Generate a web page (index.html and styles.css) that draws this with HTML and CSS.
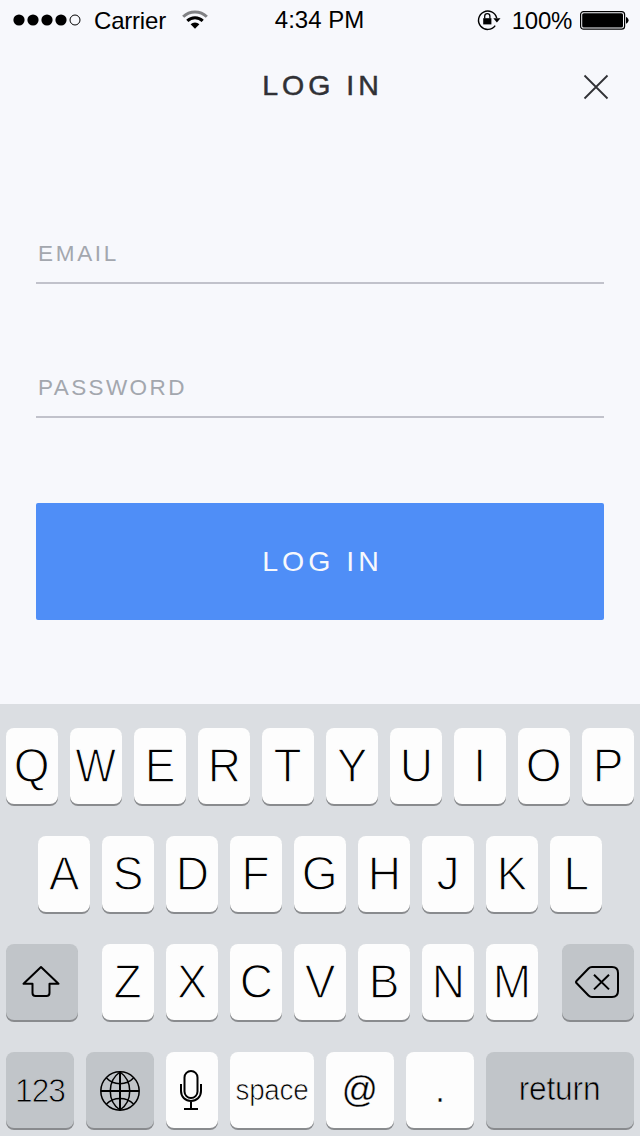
FILE: index.html
```
<!DOCTYPE html>
<html lang="en">
<head>
<meta charset="utf-8">
<title>Log in</title>
<link rel="stylesheet" href="styles.css">
</head>
<body>
<div class="screen">
  <div class="status">
    <div class="status-left">
      <svg class="signal" width="70" height="14" viewBox="0 0 70 14"><g><circle cx="6" cy="7" r="5.6"/><circle cx="20" cy="7" r="5.6"/><circle cx="34" cy="7" r="5.6"/><circle cx="48" cy="7" r="5.6"/></g><circle cx="62" cy="7" r="5" fill="none" stroke="#000"/></svg>
      <span class="carrier">Carrier</span>
      <svg class="wifi" width="26" height="20" viewBox="0 0 26 20" fill="none"><path d="M1.2 6.8a16.6 16.6 0 0 1 23.6 0" stroke="#808184" stroke-width="3"/><path d="M5.3 10.9a10.9 10.9 0 0 1 15.4 0" stroke="#000" stroke-width="3"/><path d="M8.6 14.3a6.2 6.2 0 0 1 8.8 0L13 18.7z" fill="#000"/></svg>
    </div>
    <span class="time">4:34 PM</span>
    <div class="status-right">
      <svg class="lock" width="24" height="22" viewBox="0 0 24 22" fill="none"><path d="M18.2 16.6A9.2 9.2 0 1 1 19.7 9.2" stroke="#000" stroke-width="1.4"/><path d="M16.3 9.3h7.2l-3.6 4.2z" fill="#000"/><path d="M6.2 9.2h8.2v6.2H6.2z" fill="#000"/><path d="M7.7 9.5V7.2a2.6 2.6 0 0 1 5.2 0v2.3" stroke="#000" stroke-width="1.3"/></svg>
      <span class="percent">100%</span>
      <svg class="battery" width="49" height="20" viewBox="0 0 49 20"><rect x=".6" y="1.6" width="44" height="17.6" rx="3" fill="none" stroke="#000" stroke-width="1.2"/><rect x="2.2" y="3.200" width="40.800" height="14.400" rx="1.6"/><path d="M46 7c3.4 1.300 3.4 5.400 0 6.700z"/></svg>
    </div>
  </div>

  <header class="header">
    <h1 class="title">LOG IN</h1>
    <svg class="close" width="26" height="26" viewBox="0 0 26 26"><path d="M1.5 1.5l23 23M24.5 1.5l-23 23" stroke="#303135" stroke-width="1.8"/></svg>
  </header>

  <main class="form">
    <div class="field email">EMAIL</div>
    <div class="field password">PASSWORD</div>
    <button class="submit">LOG IN</button>
  </main>

  <section class="keyboard">
    <div class="row">
      <div class="key"><span>Q</span></div><div class="key"><span class="w">W</span></div><div class="key"><span>E</span></div><div class="key"><span>R</span></div><div class="key"><span>T</span></div><div class="key"><span>Y</span></div><div class="key"><span>U</span></div><div class="key"><span>I</span></div><div class="key"><span>O</span></div><div class="key"><span>P</span></div>
    </div>
    <div class="row">
      <div class="key"><span>A</span></div><div class="key"><span>S</span></div><div class="key"><span>D</span></div><div class="key"><span>F</span></div><div class="key"><span>G</span></div><div class="key"><span>H</span></div><div class="key"><span>J</span></div><div class="key"><span>K</span></div><div class="key"><span>L</span></div>
    </div>
    <div class="row spread">
      <div class="key dark side">
        <svg width="40" height="34" viewBox="0 0 40 34" fill="none" stroke="#000" stroke-width="2" stroke-linejoin="round"><path d="M19 2L1.500 18.800H10.500V28q0 3 3 3h11q3 0 3-3v-9.200H36.500z"/></svg>
      </div>
      <div class="letters">
        <div class="key"><span>Z</span></div><div class="key"><span>X</span></div><div class="key"><span>C</span></div><div class="key"><span>V</span></div><div class="key"><span>B</span></div><div class="key"><span>N</span></div><div class="key"><span>M</span></div>
      </div>
      <div class="key dark side">
        <svg width="46" height="34" viewBox="0 0 46 34" fill="none" stroke="#000" stroke-width="2" stroke-linejoin="round"><path d="M17 2H37q6 0 6 6v18q0 6-6 6H17q-2 0-3.500-1.500L1.700 18.300q-1.300-1.300 0-2.600L13.500 3.500Q15 2 17 2zM19 9.800l15 14.600M34 9.800L19 24.400"/></svg>
      </div>
    </div>
    <div class="row">
      <div class="key dark mid"><span class="digits">123</span></div>
      <div class="key dark mid">
        <svg class="globe" width="42" height="42" viewBox="0 0 42 42" fill="none" stroke="#000" stroke-width="1.500"><circle cx="21" cy="21" r="19.200"/><path stroke-width="2" d="M21 2v38M2 21h38"/><path d="M21 2C8 11 8 31 21 40M21 2c13 9 13 29 0 38M7.500 8c7 7.500 20 7.500 27 0M7.500 34c7-7.500 20-7.500 27 0"/></svg>
      </div>
      <div class="key">
        <svg class="mic" width="24" height="42" viewBox="0 0 24 42" fill="none" stroke="#000" stroke-width="2"><rect x="5.500" y="2" width="13" height="27" rx="6.500"/><path d="M2 15v7c0 6 4.500 10 10 10s10-4 10-10v-7M12 32v8M5 40h14"/></svg>
      </div>
      <div class="key space"><span class="word">space</span></div>
      <div class="key mid"><span class="at">@</span></div>
      <div class="key mid"><span class="dot">.</span></div>
      <div class="key dark return"><span class="word big">return</span></div>
    </div>
  </section>
</div>
</body>
</html>
```
FILE: styles.css
```
* { box-sizing: border-box; }
body {
  margin: 0;
  font-family: "Liberation Sans", Arial, sans-serif;
  color: #000;
}
svg { display: block; flex: none; }
.screen {
  width: 640px;
  height: 1136px;
  overflow: hidden;
  background: #f7f8fc;
  display: flex;
  flex-direction: column;
}
.status {
  height: 40px;
  display: grid;
  grid-template-columns: 1fr auto 1fr;
  align-items: center;
  padding: 0 11px 0 13px;
  font-size: 24px;
  line-height: 28px;
}
.status-left, .status-right { display: flex; align-items: center; }
.status-right { justify-content: flex-end; }
.time { margin: 0 2px 0 -1px; }
.carrier { margin-left: 11px; letter-spacing: -0.2px; padding-top: 2px; }
.wifi { margin-left: 16px; }
.percent { margin: 2px 8px 0 11px; letter-spacing: -0.3px; }

.header {
  height: 90px;
  display: grid;
  grid-template-columns: 1fr auto 1fr;
  padding: 28px 31px 0;
}
.title {
  grid-column: 2;
  margin: 0 0 0 5px;
  font-size: 28.500px;
  line-height: 34px;
  font-weight: 400;
  letter-spacing: 4px;
  color: #303135;
  -webkit-text-stroke: 0.500px #303135;
}
.close { justify-self: end; margin-top: 6px; }

.form {
  height: 574px;
  padding: 94px 36px 0;
  display: flex;
  flex-direction: column;
}
.field {
  height: 60px;
  padding: 16px 0 0 2px;
  border-bottom: 2px solid #c1c2cb;
  font-size: 22.500px;
  line-height: 28px;
  color: #a3a7ae;
}
.email { letter-spacing: 2.700px; }
.password { margin-top: 74px; letter-spacing: 2.400px; }
.submit {
  height: 117px;
  margin-top: 85px;
  border: 0;
  border-radius: 2px;
  background: #4f8ef7;
  color: #f7f8fc;
  font: 28.500px/34px "Liberation Sans", Arial, sans-serif;
  letter-spacing: 4px;
  padding: 0 0 2px 5px;
}

.keyboard {
  height: 432px;
  background: #dbdee2;
  padding: 24px 6px 0;
  display: flex;
  flex-direction: column;
  gap: 32px;
}
.row, .letters { display: flex; justify-content: center; gap: 12px; }
.spread { justify-content: space-between; }
.key {
  width: 52px;
  height: 76px;
  flex: none;
  border-radius: 8px;
  background: #fdfdfd;
  box-shadow: 0 2px 0 #898b8e;
  display: flex;
  align-items: center;
  justify-content: center;
  font-size: 48px;
  line-height: 76px;
  -webkit-text-stroke: 1.300px #fdfdfd;
}
.key svg { -webkit-text-stroke: 0; }
.key span { display: block; transform: scaleX(0.960); }
.key .w { transform: scaleX(0.900); }
.dark { background: #c1c5c9; -webkit-text-stroke-color: #c1c5c9; }
.side { width: 72px; }
.mid { width: 68px; }
.space { width: 84px; }
.return { width: 148px; }
.mic { margin-right: 2px; }
.globe { margin-top: 2px; }
.key .digits { font-size: 33px; -webkit-text-stroke-width: 0.900px; letter-spacing: -1px; padding-top: 2px; }
.key .word { font-size: 29px; -webkit-text-stroke-width: 0.700px; letter-spacing: -0.300px; }
.key .big { font-size: 33px; letter-spacing: -0.200px; padding-bottom: 2px; }
.key .at { font-size: 37px; -webkit-text-stroke-width: 0.300px; }
.key .dot { font-size: 36px; -webkit-text-stroke-width: 0.500px; }
```
